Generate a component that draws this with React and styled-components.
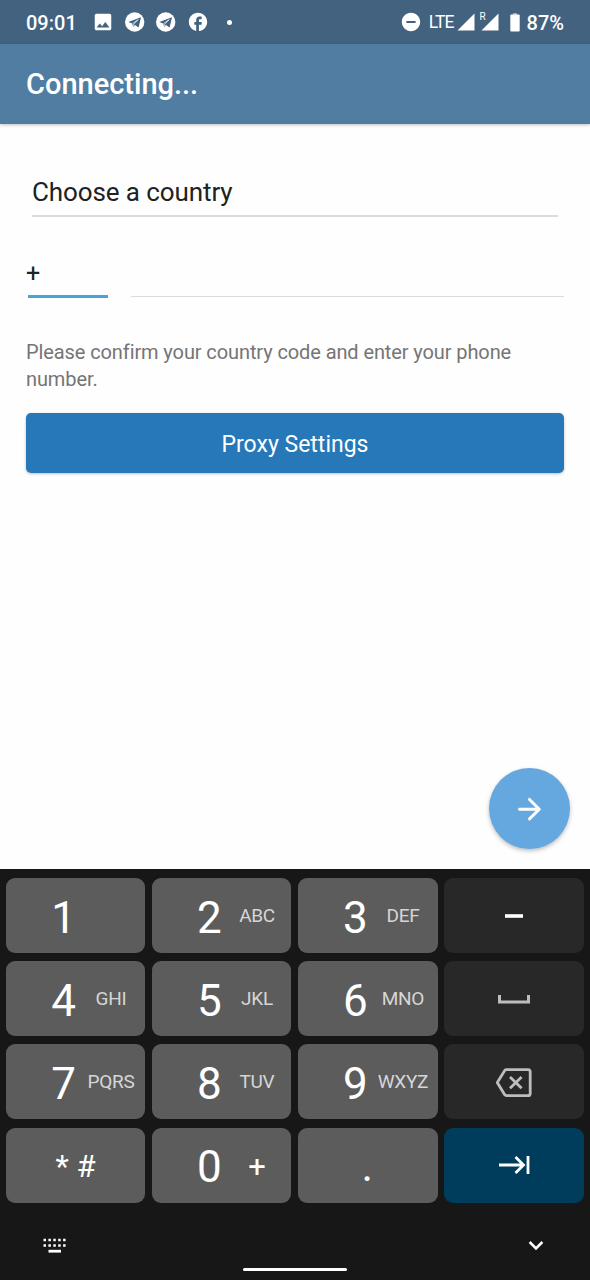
import React from 'react';
import styled, { createGlobalStyle } from "styled-components";
import { MdImage, MdFacebook, MdDoNotDisturbOn } from "react-icons/md";

const GlobalStyle = createGlobalStyle`
  * { box-sizing: border-box; }
  body {
    margin: 0;
    background: #fefefe;
    font-family: Roboto, "Noto Sans", sans-serif;
  }
  svg { display: block; flex: none; }
`;

const Screen = styled.div`
  display: flex;
  flex-direction: column;
  width: 590px;
  height: 1280px;
  overflow: hidden;
`;

const StatusBar = styled.div`
  display: flex;
  align-items: center;
  justify-content: space-between;
  height: 44px;
  padding: 0 26px 0 25px;
  background: #426280;
  color: #fff;
`;

const StatusGroup = styled.div`
  display: flex;
  align-items: center;
  height: 44px;
`;

const StatusText = styled.span`
  font-size: 20px;
  line-height: 44px;
  font-weight: 500;
  padding: 1px 0 0 ${props => props.$indent || "0"};
`;

const NetworkText = styled.span`
  font-size: 17.5px;
  line-height: 44px;
  margin: 0 3px 0 7px;
  letter-spacing: -0.9px;
`;

const NoticeIcons = styled.div`
  display: flex;
  align-items: center;
  gap: 11px;
  margin-left: 15px;
`;

const Dot = styled.span`
  width: 5px;
  height: 5px;
  margin-left: 7px;
  border-radius: 50%;
  background: #fff;
`;

const Roaming = styled.span`
  align-self: flex-start;
  width: 6px;
  margin: 11px -5px 0 5px;
  font-size: 10px;
  line-height: 11px;
`;

const BatteryGroup = styled.div`
  display: flex;
  margin: 0 7px 0 11px;
`;

const Header = styled.header`
  display: flex;
  align-items: center;
  height: 80px;
  padding-left: 26px;
  background: #517da2;
  box-shadow: 0 1px 3px rgba(0, 0, 0, 0.25);
`;

const Title = styled.h1`
  margin: 0;
  color: #fff;
  font-size: 29px;
  font-weight: 500;
  line-height: 40px;
`;

const Form = styled.main`
  display: flex;
  flex-direction: column;
  height: 745px;
  padding: 45px 20px 20px 26px;
`;

const CountrySelect = styled.div`
  height: 48px;
  margin: 0 12px 0 6px;
  border-bottom: 2px solid #dbdbdb;
  color: #212121;
  font-size: 26px;
  letter-spacing: -0.1px;
  line-height: 46px;
`;

const PhoneRow = styled.div`
  display: flex;
  gap: 23px;
  height: 81px;
  margin-right: 6px;
`;

const CodeField = styled.div`
  width: 80px;
  margin-left: 2px;
  border-bottom: 3px solid #45a3dd;
  color: #212121;
  font-size: 25px;
  line-height: 28px;
  padding-top: 43px;
`;

const CodeText = styled.span`
  margin-left: -2px;
`;

const NumberField = styled.div`
  flex: 1;
  height: 80px;
  border-bottom: 1px solid #dbdbdb;
`;

const Hint = styled.p`
  margin: 41px 6px 0 0;
  color: #757575;
  font-size: 20px;
  letter-spacing: -0.1px;
  line-height: 27px;
`;

const ProxyButton = styled.button`
  flex: none;
  height: 60px;
  margin: 20px 6px 0 0;
  padding: 2px 0 0;
  border: none;
  border-radius: 5px;
  background: #2678b8;
  box-shadow: 0 1px 3px rgba(0, 0, 0, 0.25);
  color: #fff;
  font-family: inherit;
  font-size: 23px;
`;

const NextButton = styled.button`
  display: flex;
  align-items: center;
  justify-content: center;
  flex: none;
  align-self: flex-end;
  width: 81px;
  height: 81px;
  margin-top: auto;
  padding: 0;
  border: none;
  border-radius: 50%;
  background: #65a8e0;
  box-shadow: 0 2px 4px rgba(0, 0, 0, 0.25);
`;

const Keyboard = styled.section`
  display: flex;
  flex-direction: column;
  height: 411px;
  padding-top: 9px;
  background: #171717;
`;

const Keys = styled.div`
  display: grid;
  grid-template-columns: 139.3px 139.3px 139.6px 139.8px;
  grid-auto-rows: 75px;
  gap: 8.2px 6.7px;
  padding: 0 6px;
`;

const Key = styled.div`
  display: flex;
  align-items: center;
  justify-content: ${props => props.$center ? "center" : "flex-start"};
  padding-left: ${props => props.$center ? "0" : "36.5px"};
  border-radius: 9px;
  background: ${props => props.$color || "#5c5c5c"};
  color: #fff;
`;

const Digit = styled.span`
  flex: none;
  width: 42px;
  padding-top: 4px;
  font-size: 44px;
  line-height: 72px;
  text-align: center;
`;

const Letters = styled.span`
  display: flex;
  justify-content: center;
  flex: none;
  width: 53px;
  color: #d6d6d6;
  font-size: 19px;
  letter-spacing: -0.3px;
  line-height: 75px;
`;

const Plus = styled(Letters)`
  padding-top: 2px;
  color: #fff;
  font-size: 31px;
`;

const Symbols = styled.span`
  padding: 2px 0 0 13px;
  font-size: 31px;
`;

const Period = styled.span`
  font-size: 44px;
  line-height: 75px;
  margin: 3px 1px 0 0;
`;

const Toolbar = styled.div`
  display: flex;
  justify-content: space-between;
  align-items: center;
  height: 24px;
  margin-top: 31px;
  padding: 0 46px 0 43px;
`;

const HomeBar = styled.div`
  width: 104px;
  height: 3px;
  margin: 10px auto 0;
  border-radius: 2px;
  background: #fff;
`;

const digits = [
  { digit: "1", letters: "" },
  { digit: "2", letters: "ABC" },
  { digit: "3", letters: "DEF" },
  { digit: "4", letters: "GHI" },
  { digit: "5", letters: "JKL" },
  { digit: "6", letters: "MNO" },
  { digit: "7", letters: "PQRS" },
  { digit: "8", letters: "TUV" },
  { digit: "9", letters: "WXYZ" },
];

const Telegram = () => (
  <svg width="20" height="20" viewBox="0 0 20 20">
    <circle cx="9.7" cy="10" r="9.7" fill="#fff" />
    <path d="M3.3 10.1L16 5.2L13.6 15.6L10 13L8.1 14.9L7.3 11.6z" fill="#426280" />
    <path d="M7.6 11.5L13.2 7.6L8.8 12.1L8.2 14.4" fill="none" stroke="#fff" strokeWidth="0.7" />
  </svg>
);

const Signal = () => (
  <svg width="18" height="18" viewBox="0 0 18 18">
    <path d="M17.5 0.5V17.5H0.5z" fill="#fff" />
  </svg>
);

const Battery = () => (
  <svg width="10" height="19" viewBox="0 0 10 19">
    <path d="M3 0h4v2H3z" fill="#fff" opacity="0.5" />
    <rect x="0.3" y="1.5" width="9.4" height="17" rx="1" fill="#fff" />
  </svg>
);

const DashIcon = () => (
  <svg width="18" height="5" viewBox="0 0 18 5">
    <path d="M0 3h18" stroke="#fff" strokeWidth="3.6" />
  </svg>
);

const SpaceIcon = () => (
  <svg width="32" height="10" viewBox="0 0 32 10">
    <path d="M1.5 1v7h29v-7" fill="none" stroke="#bdbdbd" strokeWidth="3" />
  </svg>
);

const BackspaceIcon = () => (
  <svg width="37" height="30" viewBox="0 0 37 30" fill="none" stroke="#bdbdbd" strokeWidth="2.8">
    <path d="M10.5 2.6H32a2.2 2.2 0 0 1 2.2 2.2V26.4A2.2 2.2 0 0 1 32 28.6H10.5a2.2 2.2 0 0 1-1.8-.9L1.3 15.6l7.4-12.1a2.2 2.2 0 0 1 1.8-.9z" />
    <path d="M14 9.9l11.6 11.4M25.6 9.9L14 21.3" />
  </svg>
);

const TabIcon = () => (
  <svg width="31" height="19" viewBox="0 0 31 19" fill="none" stroke="#fff" strokeWidth="2.8">
    <path d="M0 9h24M16.5 1l8 8-8 8M29 0v18" />
  </svg>
);

const ArrowIcon = () => (
  <svg width="24" height="24" viewBox="0 0 24 24" fill="none" stroke="#fff" strokeWidth="2.9" strokeLinecap="round" strokeLinejoin="round">
    <path d="M1.5 12.3h19M11.5 2.4l9.8 9.9-9.8 9.6" />
  </svg>
);

const KeyboardIcon = () => (
  <svg width="24" height="16" viewBox="0 0 24 16" stroke="#fff">
    <path d="M0.5 2.1h23M0.5 7.5h23" strokeWidth="2.5" strokeDasharray="2.5 2.4" />
    <path d="M5.5 13.2h12.5" strokeWidth="2.8" />
  </svg>
);

const ChevronIcon = () => (
  <svg width="16" height="11" viewBox="0 0 16 11" fill="none" stroke="#fff" strokeWidth="2.5">
    <path d="M1.6 2L8 8.5l6.4-6.5" />
  </svg>
);

class App extends React.Component {
  render() {
    return (
      <>
        <GlobalStyle />
        <Screen>
          <StatusBar>
            <StatusGroup>
              <StatusText $indent="1px">09:01</StatusText>
              <NoticeIcons>
                <MdImage size={22} />
                <Telegram />
                <Telegram />
                <MdFacebook size={22} />
                <Dot />
              </NoticeIcons>
            </StatusGroup>
            <StatusGroup>
              <MdDoNotDisturbOn size={22} />
              <NetworkText>LTE</NetworkText>
              <Signal />
              <Roaming>R</Roaming>
              <Signal />
              <BatteryGroup><Battery /></BatteryGroup>
              <StatusText>87%</StatusText>
            </StatusGroup>
          </StatusBar>
          <Header>
            <Title>Connecting...</Title>
          </Header>
          <Form>
            <CountrySelect>Choose a country</CountrySelect>
            <PhoneRow>
              <CodeField><CodeText>+</CodeText></CodeField>
              <NumberField />
            </PhoneRow>
            <Hint>Please confirm your country code and enter your phone number.</Hint>
            <ProxyButton>Proxy Settings</ProxyButton>
            <NextButton aria-label="Next"><ArrowIcon /></NextButton>
          </Form>
          <Keyboard>
            <Keys>
              {digits.map((item, index) => (
                <React.Fragment key={item.digit}>
                  <Key>
                    <Digit>{item.digit}</Digit>
                    <Letters>{item.letters}</Letters>
                  </Key>
                  {index === 2 && <Key $center $color="#282828"><DashIcon /></Key>}
                  {index === 5 && <Key $center $color="#282828"><SpaceIcon /></Key>}
                  {index === 8 && <Key $center $color="#282828"><BackspaceIcon /></Key>}
                </React.Fragment>
              ))}
              <Key><Symbols>* #</Symbols></Key>
              <Key>
                <Digit>0</Digit>
                <Plus>+</Plus>
              </Key>
              <Key $center><Period>.</Period></Key>
              <Key $center $color="#003c5b"><TabIcon /></Key>
            </Keys>
            <Toolbar>
              <KeyboardIcon />
              <ChevronIcon />
            </Toolbar>
            <HomeBar />
          </Keyboard>
        </Screen>
      </>
    );
  }
}

export default App;
